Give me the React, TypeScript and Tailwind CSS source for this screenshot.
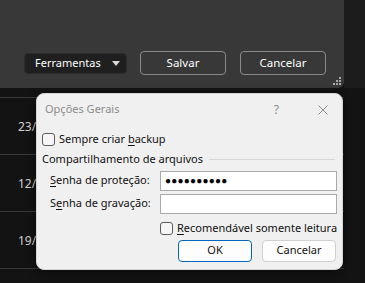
import React from "react"

const FONT = { fontFamily: '"Noto Sans", "Open Sans", Arial, sans-serif' }

function Accel({ text, index }: { text: string; index: number }) {
  return (
    <span className="whitespace-nowrap">
      {text.slice(0, index)}
      <span className="underline underline-offset-2">{text[index]}</span>
      {text.slice(index + 1)}
    </span>
  )
}

function CheckBox() {
  return <span className="block h-[13px] w-[13px] shrink-0 rounded-[3px] border border-[#5c5c5c] bg-[#f6f6f6]" />
}

function GripDots() {
  const dots = [
    [6, 0],
    [3, 3],
    [6, 3],
    [0, 6],
    [3, 6],
    [6, 6],
  ]
  return (
    <svg width="8" height="8" viewBox="0 0 8 8" className="absolute bottom-[3px] right-[3px]">
      {dots.map(([x, y]) => (
        <rect key={`${x}-${y}`} x={x} y={y} width="2" height="2" fill="#a8a8a8" />
      ))}
    </svg>
  )
}

export default function App() {
  const dates = ["23/", "12/", "19/"]

  return (
    <div className="relative h-[283px] w-[365px] overflow-hidden bg-[#131313]" style={FONT}>
      {/* top editor panel */}
      <div className="flex">
        <div className="relative flex h-[88px] w-[344px] items-end rounded-br-[6px] bg-[#383838] pb-[13px] pl-[24px]">
          <div className="flex items-center">
            <button
              type="button"
              className="flex h-[21px] w-[103px] items-center justify-between rounded-[4px] border border-[#2c2c2c] bg-[#1f1f1f] pl-[10px] pr-[6px] text-[11px] text-white"
            >
              Ferramentas
              <svg width="8" height="5" viewBox="0 0 8 5">
                <path d="M0 0h8L4 5z" fill="#d8d8d8" />
              </svg>
            </button>
            <button
              type="button"
              className="ml-[13px] h-[24px] w-[86px] rounded-[4px] border border-[#8a8a8a] text-[11.5px] text-white"
            >
              Salvar
            </button>
            <button
              type="button"
              className="ml-[14px] h-[24px] w-[86px] rounded-[4px] border border-[#8a8a8a] text-[11.5px] text-white"
            >
              Cancelar
            </button>
          </div>
          <GripDots />
        </div>
        <div className="h-[88px] flex-1 bg-[#1c1c1c]" />
      </div>

      {/* list rows behind the dialog */}
      <div className="w-[344px]">
        <div className="h-[10px] border-b border-[#3a3a3a]" />
        {dates.map((d) => (
          <div key={d} className="flex h-[57px] items-center border-b border-[#3a3a3a] pl-[18px] pt-[2px] text-[12px] text-[#d0d0d0]">
            {d}
          </div>
        ))}
      </div>

      {/* Opções Gerais dialog */}
      <div className="absolute left-[36px] top-[93px] h-[177px] w-[307px] rounded-[8px] border border-[#d6d6d6] bg-[#f0f0f0] text-[11px] text-[#111] shadow-[0_2px_8px_rgba(0,0,0,0.5)]">
        <div className="flex h-[31px] items-center pl-[8px] pr-[14px]">
          <span className="text-[11px] text-[#8c8c8c]">Opções Gerais</span>
          <span className="ml-auto mr-[39px] text-[12px] text-[#8c8c8c]">?</span>
          <svg width="10" height="10" viewBox="0 0 10 10">
            <path d="M0.5 0.5l9 9M9.5 0.5l-9 9" stroke="#8c8c8c" strokeWidth="1" />
          </svg>
        </div>

        <div className="pl-[5px] pr-[5px]">
          <label className="mt-[7px] flex h-[14px] items-center gap-[4px]">
            <CheckBox />
            <Accel text="Sempre criar backup" index={13} />
          </label>

          <div className="mt-[5px] flex items-center gap-[6px]">
            <span className="whitespace-nowrap">Compartilhamento de arquivos</span>
            <span className="mr-[2px] h-px flex-1 bg-[#d8d8d8]" />
          </div>

          <div className="mt-[3px] flex items-center">
            <span className="w-[118px] pl-[8px]">
              <Accel text="Senha de proteção:" index={0} />
            </span>
            <div className="flex h-[20px] flex-1 items-center border border-[#a9a9a9] bg-white pl-[4px] text-[10px] tracking-[0.2px] text-black">
              ●●●●●●●●●●
            </div>
          </div>

          <div className="mt-[3px] flex items-center">
            <span className="w-[118px] pl-[8px]">
              <Accel text="Senha de gravação:" index={1} />
            </span>
            <div className="h-[20px] flex-1 border border-[#a9a9a9] bg-white" />
          </div>

          <label className="ml-[118px] mt-[8px] flex h-[14px] items-center gap-[4px]">
            <CheckBox />
            <Accel text="Recomendável somente leitura" index={0} />
          </label>

          <div className="mr-[1px] mt-[4px] flex justify-end gap-[10px]">
            <button
              type="button"
              className="h-[22px] w-[74px] rounded-[4px] border border-[#0067c0] bg-[#fdfdfd] text-[11px]"
            >
              OK
            </button>
            <button
              type="button"
              className="h-[22px] w-[74px] rounded-[4px] border border-[#d0d0d0] bg-[#fdfdfd] text-[11px]"
            >
              Cancelar
            </button>
          </div>
        </div>
      </div>
    </div>
  )
}
